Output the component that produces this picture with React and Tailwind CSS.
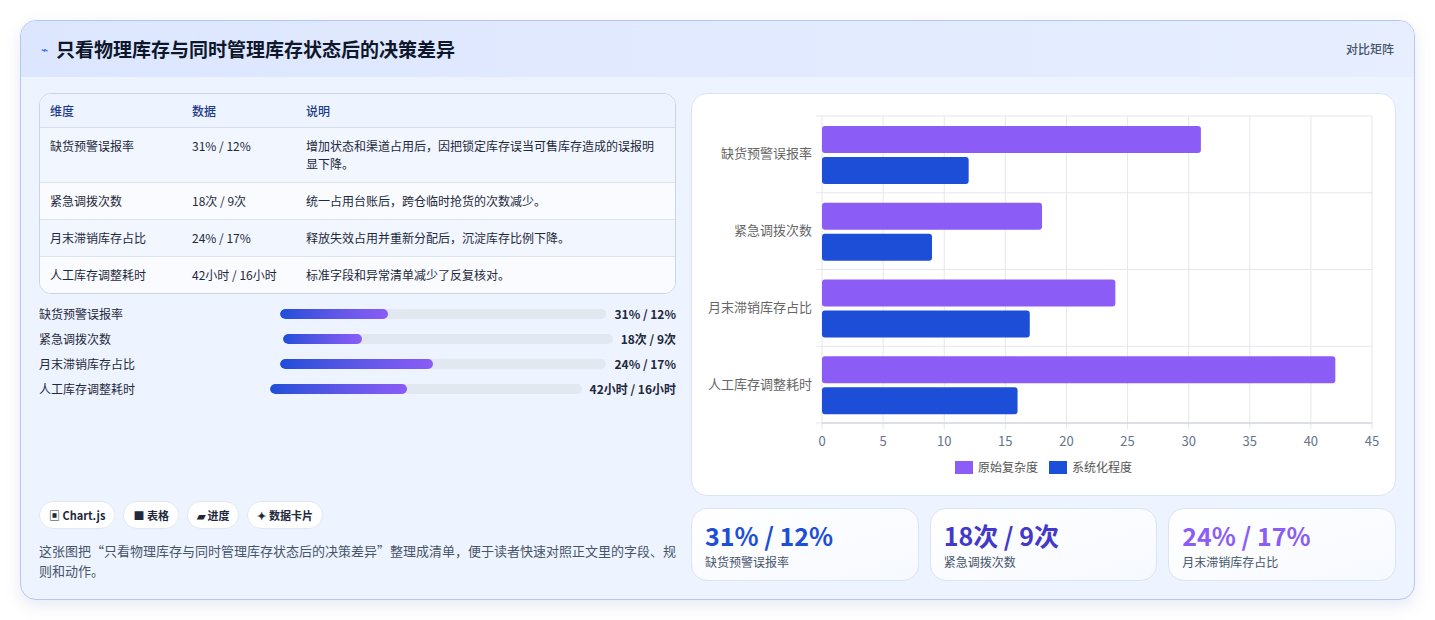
export default function App() {
  const font = { fontFamily: '"Noto Sans CJK SC", "Noto Sans", sans-serif' };
  const rows = [
    ["缺货预警误报率", "31% / 12%", "增加状态和渠道占用后，因把锁定库存误当可售库存造成的误报明显下降。"],
    ["紧急调拨次数", "18次 / 9次", "统一占用台账后，跨仓临时抢货的次数减少。"],
    ["月末滞销库存占比", "24% / 17%", "释放失效占用并重新分配后，沉淀库存比例下降。"],
    ["人工库存调整耗时", "42小时 / 16小时", "标准字段和异常清单减少了反复核对。"],
  ];
  const fills = ["33%", "24%", "47%", "44%"];
  const data = [[31, 12], [18, 9], [24, 17], [42, 16]];
  const X0 = 130, PW = 550, Y0 = 22, PH = 307;
  const sx = (v) => X0 + (v / 45) * PW;
  const band = PH / 4;
  return (
    <div className="w-[1435px] h-[620px] bg-white p-5" style={font}>
      <div className="w-[1395px] h-[580px] rounded-2xl border border-[#b8c6f5] bg-[#eef4ff] overflow-hidden flex flex-col shadow-[0_6px_16px_rgba(100,116,180,0.15)]">
        <div className="h-[56px] shrink-0 flex items-center justify-between px-5 bg-gradient-to-r from-[#dce6ff] to-[#e6eeff]">
          <div className="flex items-center gap-2">
            <span className="text-[#2563eb] text-[12px]">⌁</span>
            <span className="text-[19px] font-bold text-[#0f172a]">只看物理库存与同时管理库存状态后的决策差异</span>
          </div>
          <span className="text-[12px] text-[#475569] font-medium">对比矩阵</span>
        </div>
        <div className="flex-1 flex gap-[15px] px-[18px] pt-[16px] pb-[18px]">
          <div className="w-[639px] flex flex-col justify-between">
            <div>
              <div className="rounded-xl border border-[#cbd5e1] overflow-hidden bg-[#f8fbff] text-[12px] text-[#1e293b]">
                <div className="flex h-[34px] items-center bg-[#eef4ff] border-b border-[#d6deea] text-[#1e3a8a] font-medium">
                  <div className="w-[152px] pl-[10px]">维度</div><div className="w-[114px]">数据</div><div className="flex-1">说明</div>
                </div>
                {rows.map((r, i) => (
                  <div key={i} className={`flex py-[9px] leading-[18px] ${i < 3 ? "border-b border-[#dde4ee]" : ""} ${i % 2 ? "bg-[#f9fbff]" : "bg-[#f1f6ff]"}`}>
                    <div className="w-[152px] pl-[10px]">{r[0]}</div><div className="w-[114px]">{r[1]}</div><div className="flex-1 pr-[10px]">{r[2]}</div>
                  </div>
                ))}
              </div>
              <div className="mt-[11px] flex flex-col gap-[8px] text-[12px] text-[#1e293b]">
                {rows.map((r, i) => (
                  <div key={i} className="flex items-center gap-2 h-[17px]">
                    <div className="flex-1">{r[0]}</div>
                    <div className="flex-[1.4] h-[10px] rounded-full bg-[#e2e8f0] overflow-hidden">
                      <div className="h-full rounded-full bg-gradient-to-r from-[#1d4ed8] to-[#8b5cf6]" style={{ width: fills[i] }} />
                    </div>
                    <div className="shrink-0 font-bold">{r[1]}</div>
                  </div>
                ))}
              </div>
            </div>
            <div>
              <div className="flex gap-2 text-[11px] font-semibold text-[#1e293b]">
                {["▣ Chart.js", "■ 表格", "▰ 进度", "✦ 数据卡片"].map((c) => (
                  <span key={c} className="h-[28px] px-[9px] flex items-center rounded-full bg-white border border-[#e2e8f0]">{c}</span>
                ))}
              </div>
              <p className="mt-[12px] text-[13px] leading-[20px] text-[#475569]">这张图把“只看物理库存与同时管理库存状态后的决策差异”整理成清单，便于读者快速对照正文里的字段、规则和动作。</p>
            </div>
          </div>
          <div className="flex-1 flex flex-col gap-[12px]">
            <div className="h-[403px] rounded-2xl bg-white border border-[#dbe4f3]">
              <svg width="703" height="402" className="block">
                {Array.from({ length: 10 }, (_, k) => (
                  <line key={k} x1={sx(k * 5)} x2={sx(k * 5)} y1={Y0} y2={Y0 + PH + 6} stroke="#e5e7eb" />
                ))}
                {[0, 1, 2, 3, 4].map((k) => (
                  <line key={k} x1={X0 - 6} x2={X0 + PW} y1={Y0 + k * band} y2={Y0 + k * band} stroke="#e5e7eb" />
                ))}
                <line x1={X0} x2={X0 + PW} y1={Y0 + PH} y2={Y0 + PH} stroke="#c8ccd8" />
                {data.map((d, i) => {
                  const top = Y0 + i * band + 10;
                  return (
                    <g key={i}>
                      <rect x={X0} y={top} width={sx(d[0]) - X0} height={27} rx={3} fill="#8b5cf6" />
                      <rect x={X0} y={top + 31} width={sx(d[1]) - X0} height={27} rx={3} fill="#1d4ed8" />
                      <text x={X0 - 10} y={Y0 + i * band + band / 2 + 4} textAnchor="end" fontSize="13" fill="#666" style={font}>{rows[i][0]}</text>
                    </g>
                  );
                })}
                {Array.from({ length: 10 }, (_, k) => (
                  <text key={k} x={sx(k * 5)} y={352} textAnchor="middle" fontSize="13" fill="#64748b" style={font}>{k * 5}</text>
                ))}
                <rect x={263} y={367} width={18} height={13} fill="#8b5cf6" />
                <text x={286} y={378} fontSize="12" fill="#555" style={font}>原始复杂度</text>
                <rect x={357} y={367} width={18} height={13} fill="#1d4ed8" />
                <text x={380} y={378} fontSize="12" fill="#555" style={font}>系统化程度</text>
              </svg>
            </div>
            <div className="flex gap-[11px] h-[73px]">
              {[["31% / 12%", "缺货预警误报率", "text-[#1d4ed8]"], ["18次 / 9次", "紧急调拨次数", "text-[#4338ca]"], ["24% / 17%", "月末滞销库存占比", "text-[#8b5cf6]"]].map((c) => (
                <div key={c[1]} className="flex-1 rounded-2xl bg-gradient-to-br from-white to-[#f6f9ff] border border-[#dbe4f3] px-[13px] pt-[10px]">
                  <div className={`text-[25px] font-bold leading-[32px] ${c[2]}`}>{c[0]}</div>
                  <div className="text-[12px] text-[#475569] mt-[2px]">{c[1]}</div>
                </div>
              ))}
            </div>
          </div>
        </div>
      </div>
    </div>
  );
}
